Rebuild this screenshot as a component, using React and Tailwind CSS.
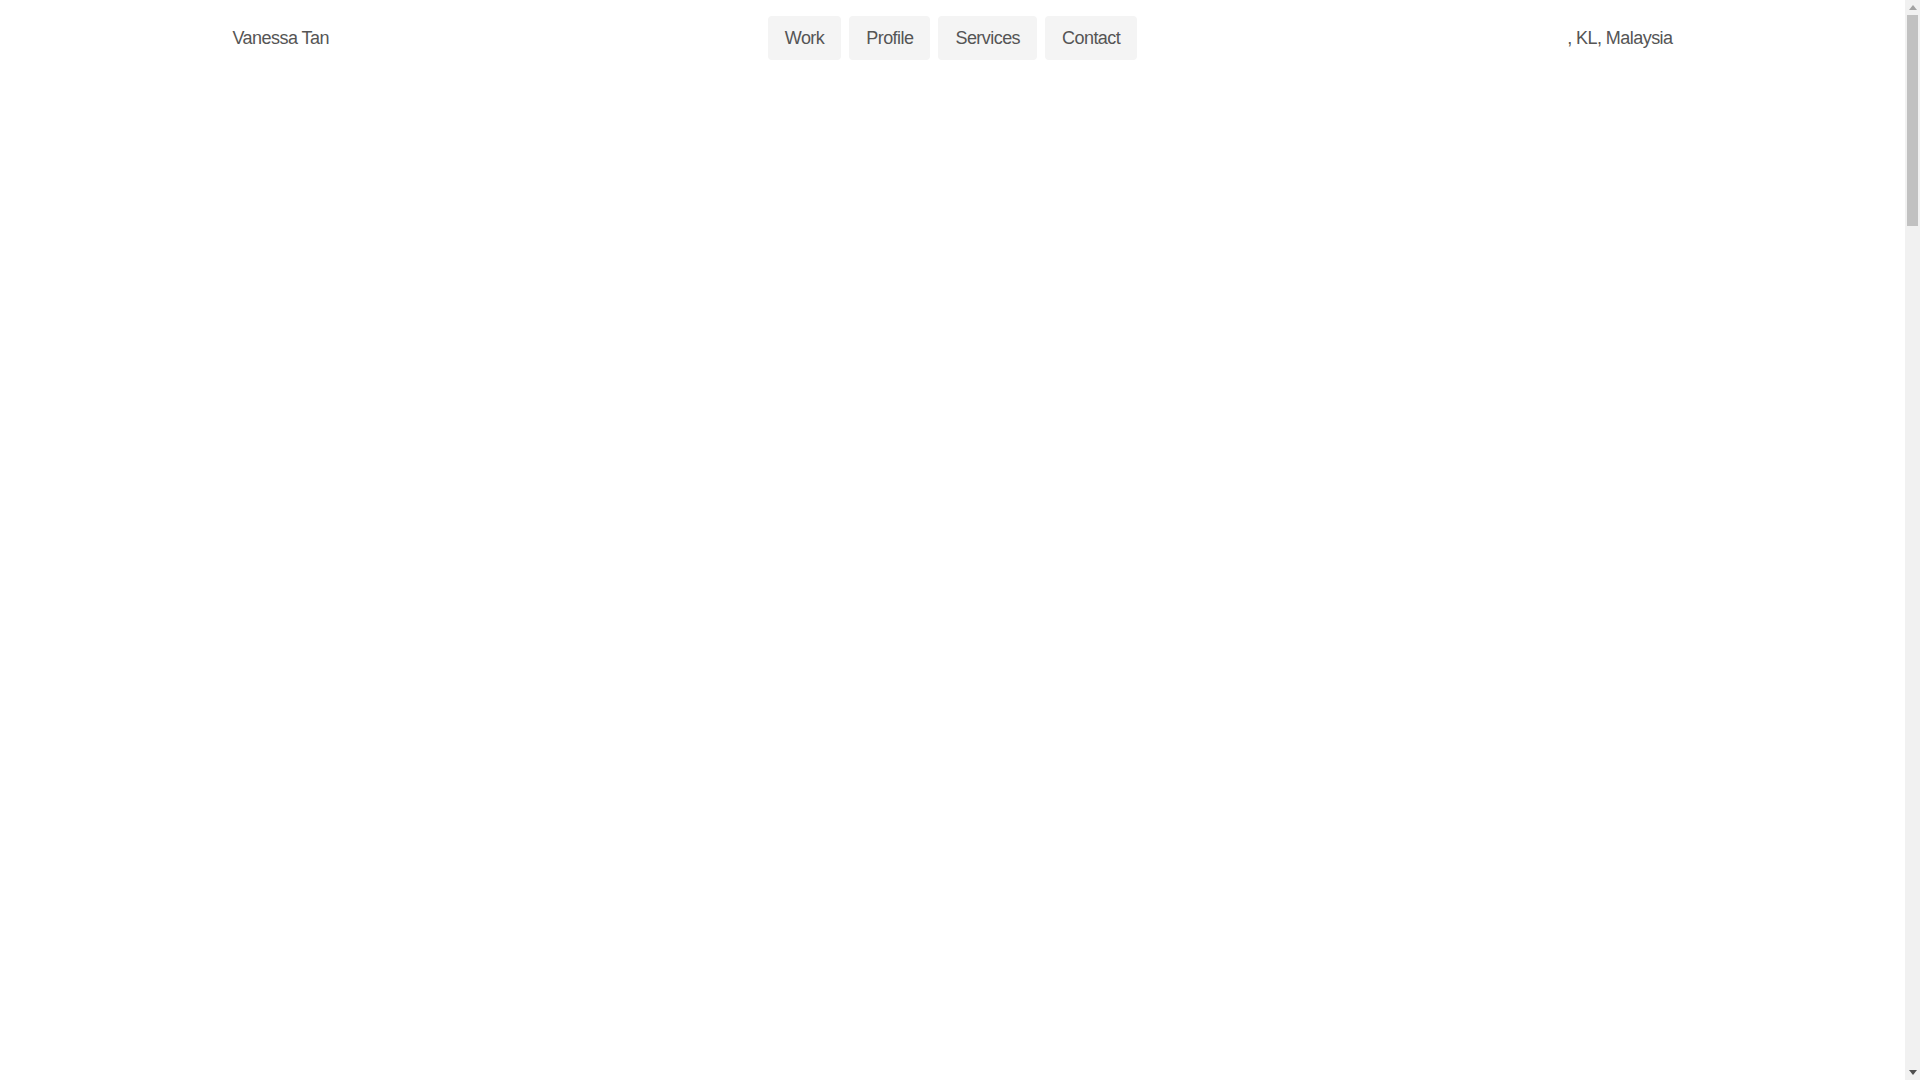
import React from "react";

const links = ["Work", "Profile", "Services", "Contact"];

function Scrollbar() {
  return (
    <div className="flex h-screen w-[15px] shrink-0 flex-col items-center bg-[#f1f1f1]">
      <div className="flex h-[15px] w-full items-center justify-center">
        <svg width="8" height="5" viewBox="0 0 8 5">
          <path d="M0 5 L4 0 L8 5 Z" fill="#a3a3a3" />
        </svg>
      </div>
      <div className="h-[211px] w-[11px] bg-[#c1c1c1]" />
      <div className="flex-1" />
      <div className="flex h-[15px] w-full items-center justify-center">
        <svg width="8" height="5" viewBox="0 0 8 5">
          <path d="M0 0 L8 0 L4 5 Z" fill="#505050" />
        </svg>
      </div>
    </div>
  );
}

export default function App() {
  return (
    <div
      className="flex h-screen overflow-hidden bg-white text-[#555555]"
      style={{ fontFamily: '"Liberation Sans", Arial, sans-serif' }}
    >
      <div className="min-w-0 flex-1">
        <header className="mx-auto grid max-w-[1440px] grid-cols-3 items-center pt-4 text-[18px] tracking-[-0.55px]">
          <div className="justify-self-start pt-[1px]">Vanessa Tan</div>
          <nav className="flex gap-2 justify-self-center">
            {links.map((l) => (
              <a
                key={l}
                href="#"
                className="flex h-[44px] items-center rounded-[4px] bg-[#f4f4f4] px-[17px] pt-[1px]"
              >
                {l}
              </a>
            ))}
          </nav>
          <div className="justify-self-end pt-[1px]">, KL, Malaysia</div>
        </header>
        <main />
      </div>
      <Scrollbar />
    </div>
  );
}
